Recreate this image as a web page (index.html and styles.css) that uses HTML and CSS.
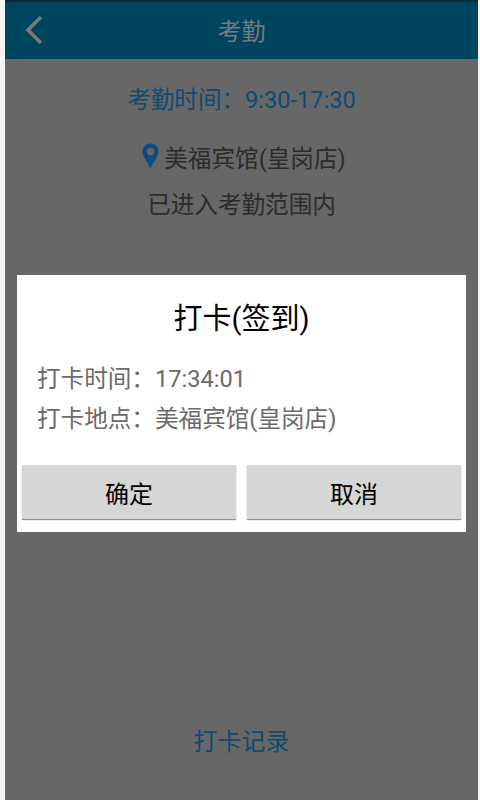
FILE: index.html
```html
<!DOCTYPE html>
<html lang="zh-CN">
<head>
    <meta charset="UTF-8">
    <meta name="viewport" content="width=device-width, initial-scale=1.0">
    <title>考勤</title>
    <link rel="stylesheet" href="styles.css">
</head>
<body>
    <div class="screen">
        <div class="status-line"></div>
        <header class="top-bar">
            <svg class="back-icon" width="20" height="32" viewBox="0 0 20 32">
                <path d="M17 3 L4 16 L17 29" fill="none" stroke="#77797b" stroke-width="3.6"/>
            </svg>
            <h1>考勤</h1>
        </header>
        <main class="content">
            <p class="work-time">考勤时间：9:30-17:30</p>
            <p class="place">
                <svg class="pin-icon" width="17" height="26" viewBox="0 0 17 26">
                    <path fill-rule="evenodd" fill="#0f4a80" d="M8.5 0.5 C3.9 0.5 0.5 4 0.5 8.5 C0.5 13.5 5.5 19 8.5 25.5 C11.5 19 16.5 13.5 16.5 8.5 C16.5 4 13.1 0.5 8.5 0.5 Z M8.5 4.8 A3.8 3.8 0 1 1 8.49 4.8 Z"/>
                </svg>
                美福宾馆(皇岗店)
            </p>
            <p class="range">已进入考勤范围内</p>
            <a class="records">打卡记录</a>
        </main>

        <!-- 打卡弹窗 -->
        <div class="dialog">
            <h2>打卡(签到)</h2>
            <div class="dialog-info">
                <p>打卡时间：17:34:01</p>
                <p>打卡地点：美福宾馆(皇岗店)</p>
            </div>
            <div class="dialog-buttons">
                <button class="btn">确定</button>
                <button class="btn">取消</button>
            </div>
        </div>
    </div>
</body>
</html>
```

FILE: styles.css
```css
body {
    margin: 0;
    padding: 0 2px 0 5px;
    background-color: #f5f5f5;
    font-family: Roboto, "Noto Sans CJK SC", sans-serif;
    overflow: hidden;
}

p, h1, h2 {
    margin: 0;
    font-weight: normal;
}

.screen {
    position: relative;
    height: 800px;
    display: flex;
    flex-direction: column;
    background-color: #676767;
}

.status-line {
    height: 2px;
    background-color: #0a2a36;
}

.top-bar {
    height: 57px;
    padding-bottom: 2px;
    box-sizing: border-box;
    display: flex;
    align-items: center;
    justify-content: center;
    position: relative;
    background-color: #00455f;
}

.top-bar h1 {
    font-size: 24px;
    color: #767a7c;
}

.back-icon {
    position: absolute;
    left: 19px;
    top: 12px;
}

.content {
    flex: 1;
    display: flex;
    flex-direction: column;
    align-items: center;
    font-size: 23.6px;
    color: #2b2b2b;
}

.work-time {
    margin-top: 23px;
    line-height: 36px;
    color: #0f4a72;
}

.place {
    margin-top: 23px;
    padding-left: 5px;
    line-height: 36px;
    display: flex;
    align-items: center;
    gap: 5px;
}

.pin-icon {
    margin-top: -6px;
}

.range {
    margin-top: 10px;
    line-height: 36px;
}

.records {
    margin-top: auto;
    margin-bottom: 40px;
    line-height: 36px;
    font-size: 24px;
    color: #0f4a72;
}

.dialog {
    position: absolute;
    left: 12px;
    right: 12px;
    top: 275px;
    height: 257px;
    box-sizing: border-box;
    padding: 0 5px;
    display: flex;
    flex-direction: column;
    background-color: #fff;
}

.dialog h2 {
    margin-top: 22px;
    line-height: 44px;
    font-size: 29px;
    color: #000;
    text-align: center;
}

.dialog-info {
    margin-top: 18px;
    padding-left: 15px;
    font-size: 23.6px;
    color: #6a6a6a;
}

.dialog-info p {
    line-height: 40px;
}

.dialog-buttons {
    margin-top: 26px;
    display: flex;
    gap: 11px;
}

.btn {
    flex: 1;
    height: 54px;
    padding: 0;
    border: none;
    background-color: #d6d6d6;
    box-shadow: 0 1px 1px #8f8f8f;
    font-family: inherit;
    font-size: 24px;
    color: #000;
}
```
